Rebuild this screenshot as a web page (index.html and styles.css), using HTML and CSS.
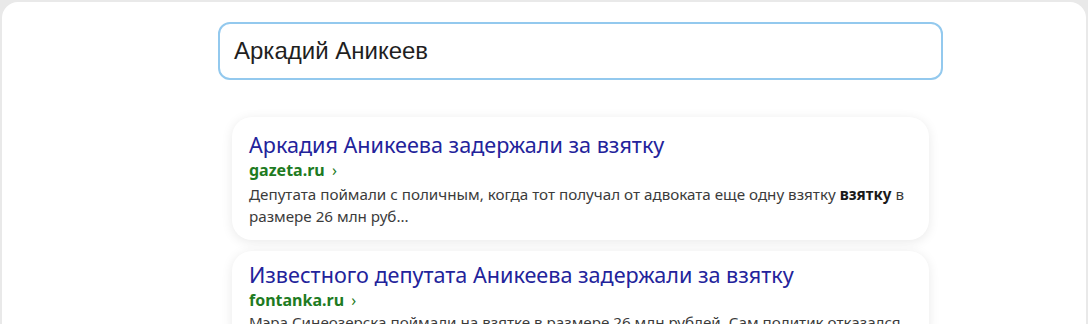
FILE: index.html
```html
<!DOCTYPE html>
<html lang="ru">
<head>
    <meta charset="UTF-8">
    <meta name="viewport" content="width=device-width, initial-scale=1.0">
    <title>Аркадий Аникеев — поиск</title>
    <link rel="stylesheet" href="styles.css">
</head>
<body>
    <div class="panel">
        <div class="search">
            <div class="search-input">Аркадий Аникеев</div>
        </div>

        <div class="results">
            <div class="card">
                <div class="card-title">Аркадия Аникеева задержали за взятку</div>
                <div class="card-source">gazeta.ru <span class="arrow">›</span></div>
                <div class="card-text">Депутата поймали с поличным, когда тот получал от адвоката еще одну взятку <b>взятку</b> в размере 26 млн руб...</div>
            </div>

            <div class="card card-tight">
                <div class="card-title">Известного депутата Аникеева задержали за взятку</div>
                <div class="card-source">fontanka.ru <span class="arrow">›</span></div>
                <div class="card-text">Мэра Синеозерска поймали на взятке в размере 26 млн рублей. Сам политик отказался</div>
            </div>
        </div>
    </div>
</body>
</html>
```

FILE: styles.css
```css
* {
    margin: 0;
    padding: 0;
    box-sizing: border-box;
}

body {
    font-family: 'Noto Sans', 'Open Sans', sans-serif;
    background: #e9e9e9;
    height: 324px;
    overflow: hidden;
    padding: 2px 2px 0;
}

.panel {
    background: #fff;
    border-radius: 16px 16px 0 0;
    height: 100%;
    padding: 20px 0 0 216px;
}

.search-input {
    width: 725px;
    height: 58px;
    border: 2px solid #93c9ee;
    border-radius: 12px;
    padding: 0 14px;
    display: flex;
    align-items: center;
    font-family: 'Liberation Sans', Arial, sans-serif;
    font-size: 24px;
    color: #1f1f1f;
}

.results {
    margin: 37px 0 0 14px;
    width: 697px;
    display: flex;
    flex-direction: column;
    gap: 11px;
}

.card {
    background: #fff;
    border-radius: 20px;
    padding: 14px 17px 13px;
    box-shadow: 0 2px 12px rgba(0, 0, 0, 0.09);
}

.card-tight {
    padding-top: 10px;
}

.card-title {
    font-size: 21.6px;
    line-height: 28px;
    color: #23239b;
}

.card-source {
    font-size: 16px;
    line-height: 22px;
    font-weight: bold;
    color: #1e7b22;
}

.arrow {
    font-weight: normal;
    color: #1e7b22;
    margin-left: 3px;
}

.card-text {
    font-size: 15.2px;
    line-height: 22px;
    color: #3b3b3b;
    margin-top: 2px;
}

.card-tight .card-text {
    margin-top: 0;
}

.card-text b {
    color: #1a1a1a;
}
```
